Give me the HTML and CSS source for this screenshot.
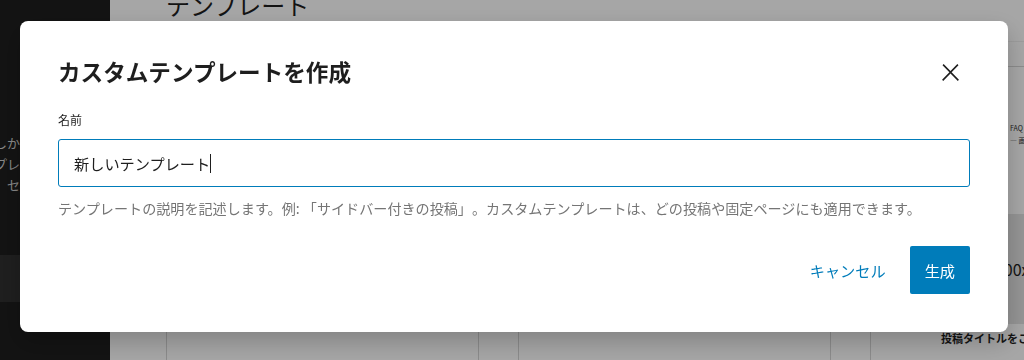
FILE: index.html
```html
<!DOCTYPE html>
<html lang="ja">
<head>
	<meta charset="utf-8">
	<title>テンプレート</title>
	<link rel="stylesheet" href="styles.css">
</head>
<body>
	<div class="app">
		<aside class="sidebar">
			<p class="sidebar-text">しか、テンプレ<br>プレートを編集<br>　セットアップ</p>
			<div class="sidebar-item"></div>
		</aside>
		<main class="main">
			<header class="main-header">
				<h1 class="page-title">テンプレート</h1>
			</header>
			<div class="cards">
				<div class="card"></div>
				<div class="card"></div>
				<div class="card card-preview">
					<div class="preview-top">
						<div class="preview-nav">FAQ　RSS</div>
						<div class="preview-sub">— 画像を追加</div>
					</div>
					<div class="preview-image">1200x630</div>
					<div class="preview-body">投稿タイトルをここに追加</div>
				</div>
			</div>
		</main>
	</div><!-- app -->

	<div class="overlay">
		<div class="modal" role="dialog">
			<div class="modal-header">
				<h2 class="modal-title">カスタムテンプレートを作成</h2>
				<button class="close-btn" aria-label="閉じる">
					<svg width="24" height="24" viewBox="0 0 24 24"><path d="M13 11.8l6.1-6.3-1-1-6.1 6.2-6.1-6.2-1 1 6.1 6.3-6.5 6.7 1 1 6.5-6.6 6.5 6.6 1-1z"/></svg>
				</button>
			</div>
			<label class="field-label">名前</label>
			<div class="text-input">新しいテンプレート<span class="caret"></span></div>
			<p class="help">テンプレートの説明を記述します。例: 「サイドバー付きの投稿」。カスタムテンプレートは、どの投稿や固定ページにも適用できます。</p>
			<div class="modal-footer">
				<button class="btn-link">キャンセル</button>
				<button class="btn-primary">生成</button>
			</div>
		</div>
	</div><!-- overlay -->
</body>
</html>
```

FILE: styles.css
```css
body{
	margin: 0;
	width: 1024px;
	height: 360px;
	overflow: hidden;
	font-family: "Noto Sans CJK JP", "Noto Sans", sans-serif;
	color: #1e1e1e;
	text-spacing-trim: space-all;
}
.app{
	display: flex;
	height: 360px;
}
.sidebar{
	width: 110px;
	flex: 0 0 110px;
	background: #1e1e1e;
	padding-top: 132px;
	box-sizing: border-box;
	overflow: hidden;
}
.sidebar-text{
	margin: 0 0 0 -6px;
	width: 200px;
	font-size: 13px;
	line-height: 21px;
	color: #d0d0d0;
	white-space: nowrap;
}
.sidebar-item{
	margin-top: 60px;
	height: 47px;
	background: #303030;
}
.main{
	flex: 1;
	background: #fff;
	padding-left: 56px;
	overflow: hidden;
}
.main-header{
	height: 50px;
	border-bottom: 1px solid #f0f0f0;
}
.page-title{
	margin: -9px 0 0;
	font-size: 24px;
	line-height: 28px;
	font-weight: 400;
}
.cards{
	display: grid;
	grid-template-columns: 313px 313px 313px;
	gap: 39px;
	padding-top: 24px;
}
.card{
	height: 320px;
	border: 1px solid #d6d6d6;
	background: #fff;
}
.preview-top{
	height: 147px;
	padding: 55px 0 0 139px;
	box-sizing: border-box;
	font-size: 7px;
	line-height: 12px;
	color: #333;
	white-space: nowrap;
}
.preview-image{
	height: 110px;
	background: #e4e4e4;
	display: flex;
	align-items: center;
	padding-left: 115px;
	font-size: 16px;
	color: #1e1e1e;
}
.preview-body{
	padding: 6px 0 0 70px;
	font-size: 11px;
	font-weight: bold;
	color: #1e1e1e;
}

.overlay{
	position: fixed;
	inset: 0;
	background: rgba(0,0,0,0.35);
	display: flex;
	align-items: flex-start;
	padding: 21px 0 0 20px;
}
.modal{
	width: 988px;
	box-sizing: border-box;
	background: #fff;
	border-radius: 8px;
	box-shadow: 0 10px 24px rgba(0,0,0,0.22);
	padding: 36px 38px 38px;
	display: flex;
	flex-direction: column;
}
.modal-header{
	display: flex;
	align-items: center;
	justify-content: space-between;
	height: 30px;
}
.modal-title{
	margin: 0;
	font-size: 22.6px;
	line-height: 30px;
	font-weight: 600;
}
.close-btn{
	width: 40px;
	height: 40px;
	border: 0;
	padding: 0;
	background: none;
	display: flex;
	align-items: center;
	justify-content: center;
	fill: #1e1e1e;
}
.close-btn svg{
	width: 27px;
	height: 27px;
}
.field-label{
	margin-top: 25px;
	font-size: 12px;
	line-height: 16px;
	color: #1e1e1e;
}
.text-input{
	margin-top: 11px;
	height: 48px;
	box-sizing: border-box;
	border: 1.5px solid #007cba;
	border-radius: 3px;
	padding: 0 15px;
	display: flex;
	align-items: center;
	font-size: 15.2px;
	color: #1e1e1e;
}
.caret{
	width: 1px;
	height: 19px;
	margin-left: 0;
	background: #1e1e1e;
}
.help{
	margin: 12px 0 0;
	font-size: 14.1px;
	line-height: 18px;
	color: #757575;
}
.modal-footer{
	margin-top: 29px;
	display: flex;
	justify-content: flex-end;
	gap: 12px;
}
.btn-link, .btn-primary{
	height: 48px;
	border: 0;
	border-radius: 2px;
	font-family: inherit;
	font-size: 15.2px;
	cursor: pointer;
}
.btn-link{
	padding: 0 12px;
	background: none;
	color: #007cba;
}
.btn-primary{
	padding: 0 15px;
	background: #007cba;
	color: #fff;
}
```
